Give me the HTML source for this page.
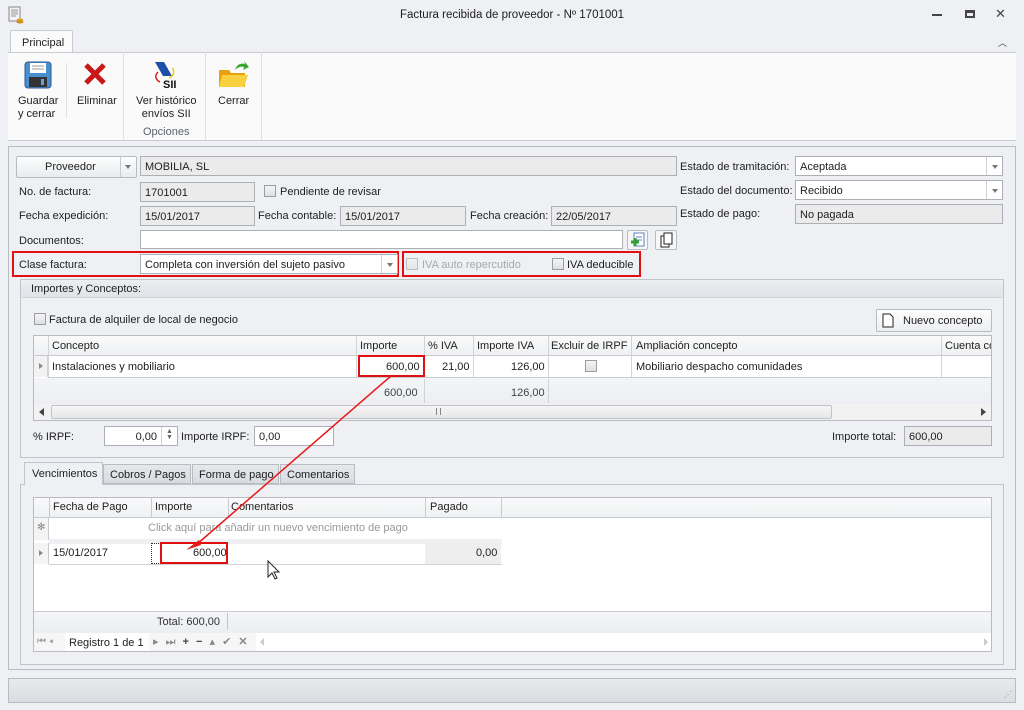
<!DOCTYPE html>
<html><head><meta charset="utf-8"><style>
*{box-sizing:border-box;margin:0;padding:0}
body{width:1024px;height:710px;position:relative;overflow:hidden;background:#eef0f3;font-family:"Liberation Sans",sans-serif;font-size:11px;color:#1e1e1e}
.a{position:absolute;white-space:nowrap}
.f{position:absolute;border:1px solid #acb0b6;background:#ebebeb;padding:4px 4px;height:20px;line-height:12px}
.w{background:#fff}
.cb{position:absolute;width:12px;height:12px;border:1px solid #9a9ea4;background:linear-gradient(#f4f4f4,#e0e0e0)}
.red{position:absolute;border:2px solid #e01010}
.dd{position:absolute;right:0;top:0;width:16px;height:100%;border-left:1px solid #d0d0d0}
.dd:after{content:"";position:absolute;left:5px;top:8px;border:3px solid transparent;border-top:4px solid #777}
</style></head><body>
<div class="a" style="left:0;top:0;width:1024px;height:30px;background:#eef0f3"></div>
<svg class="a" style="left:8px;top:6px" width="16" height="18"><rect x="1" y="1" width="11" height="14" fill="#f4f4f4" stroke="#888"/><path d="M3 4h7M3 6h7M3 8h7M3 10h5" stroke="#999"/><ellipse cx="12" cy="14" rx="3.5" ry="1.5" fill="#e0a020"/><ellipse cx="12" cy="16" rx="3.5" ry="1.5" fill="#d09010"/></svg>
<div class="a" style="left:0;width:1024px;top:9px;text-align:center;font-size:11.5px">Factura recibida de proveedor - Nº 1701001</div>
<div class="a" style="left:932px;top:14px;width:10px;height:2px;background:#444"></div>
<div class="a" style="left:965px;top:10px;width:10px;height:8px;border:2px solid #444;border-top-width:3px"></div>
<div class="a" style="left:995px;top:6px;font-size:13px;color:#444">✕</div>
<div class="a" style="left:10px;top:30px;width:63px;height:23px;background:#fbfbfb;border:1px solid #c8ccd2;border-bottom:none;border-radius:2px 2px 0 0;padding:6px 0 0 11px">Principal</div>
<div class="a" style="left:998px;top:36px;font-size:9px;color:#444">︿</div>
<div class="a" style="left:8px;top:52px;width:1008px;height:89px;background:#fafafa;border-top:1px solid #c8ccd2;border-bottom:1px solid #c8ccd2"></div>
<div class="a" style="left:123px;top:52px;width:1px;height:88px;background:#dde0e4"></div>
<div class="a" style="left:205px;top:52px;width:1px;height:88px;background:#dde0e4"></div>
<div class="a" style="left:261px;top:52px;width:1px;height:88px;background:#dde0e4"></div>
<div class="a" style="left:66px;top:63px;width:1px;height:55px;background:#dde0e4"></div>
<svg class="a" style="left:24px;top:61px" width="28" height="28"><rect x="1" y="1" width="26" height="26" rx="3" fill="#4a8ed0" stroke="#2a5a90"/><rect x="6" y="2" width="16" height="10" fill="#fff"/><path d="M8 5h12M8 8h12" stroke="#999"/><rect x="5" y="16" width="18" height="10" fill="#333"/><rect x="17" y="18" width="3" height="6" fill="#6aa0d8"/></svg>
<div class="a" style="left:18px;top:95px;line-height:13px">Guardar<br>y cerrar</div>
<svg class="a" style="left:83px;top:62px" width="24" height="24"><path d="M3 3L21 21M21 3L3 21" stroke="#c81818" stroke-width="5"/></svg>
<div class="a" style="left:77px;top:95px">Eliminar</div>
<svg class="a" style="left:150px;top:60px" width="30" height="30"><path d="M5 2h9l8 14h-9z" fill="#1d4fa8"/><path d="M8 12c-4 4-2 8 2 10" stroke="#d02020" stroke-width="1.5" fill="none"/><path d="M22 8c3 3 2 8-3 10" stroke="#e0d020" stroke-width="1.5" fill="none"/><text x="13" y="28" font-family="Liberation Sans" font-weight="bold" font-size="11" fill="#111">SII</text></svg>
<div class="a" style="left:136px;top:95px;line-height:13px;text-align:center">Ver histórico<br>envíos SII</div>
<div class="a" style="left:143px;top:126px;color:#5a6470">Opciones</div>
<svg class="a" style="left:217px;top:58px" width="34" height="34"><path d="M2 12h10l2 3h14v14H2z" fill="#e8a010"/><path d="M5 17h26l-4 12H2z" fill="#f8d040"/><path d="M18 12c2-6 6-7 10-6l-1-3 5 6-6 3 1-3c-3-1-6 0-9 3z" fill="#3aa830"/></svg>
<div class="a" style="left:218px;top:95px">Cerrar</div>
<div class="a" style="left:8px;top:146px;width:1008px;height:524px;border:1px solid #b8bcc2;background:#eef0f3"></div>
<div class="a" style="left:16px;top:156px;width:121px;height:22px;border:1px solid #b8bcc2;border-radius:2px;background:linear-gradient(#fdfdfd,#e9ebee)"></div>
<div class="a" style="left:45px;top:161px">Proveedor</div>
<div class="a" style="left:120px;top:157px;width:1px;height:20px;background:#c8ccd2"></div>
<div class="a" style="left:125px;top:165px;border:3px solid transparent;border-top:4px solid #777"></div>
<div class="f" style="left:140px;top:156px;width:537px">MOBILIA, SL</div>
<div class="a" style="left:19px;top:186px">No. de factura:</div>
<div class="f" style="left:140px;top:182px;width:115px">1701001</div>
<div class="cb" style="left:264px;top:185px"></div><div class="a" style="left:280px;top:186px">Pendiente de revisar</div>
<div class="a" style="left:19px;top:210px">Fecha expedición:</div>
<div class="f" style="left:140px;top:206px;width:115px">15/01/2017</div>
<div class="a" style="left:258px;top:210px">Fecha contable:</div>
<div class="f" style="left:340px;top:206px;width:126px">15/01/2017</div>
<div class="a" style="left:470px;top:210px">Fecha creación:</div>
<div class="f" style="left:551px;top:206px;width:126px">22/05/2017</div>
<div class="a" style="left:19px;top:235px">Documentos:</div>
<div class="f w" style="left:140px;top:230px;width:483px;height:19px"></div>
<div class="a" style="left:627px;top:230px;width:21px;height:20px;border:1px solid #b8bcc2;border-radius:2px;background:#f6f6f6"><svg width="19" height="18"><rect x="6" y="2" width="10" height="13" fill="#fff" stroke="#6080c0"/><path d="M8 6h6M8 9h6" stroke="#6080c0"/><path d="M3 11h8M7 7v8" stroke="#30a030" stroke-width="3"/></svg></div>
<div class="a" style="left:655px;top:230px;width:22px;height:20px;border:1px solid #b8bcc2;border-radius:2px;background:#f6f6f6"><svg width="20" height="18"><rect x="5" y="5" width="8" height="11" fill="#fff" stroke="#222"/><rect x="8" y="2" width="8" height="11" fill="#fff" stroke="#222"/></svg></div>
<div class="red" style="left:12px;top:251px;width:387px;height:26px"></div>
<div class="a" style="left:19px;top:259px">Clase factura:</div>
<div class="f w" style="left:140px;top:254px;width:258px"><span>Completa con inversión del sujeto pasivo</span><div class="dd"></div></div>
<div class="red" style="left:402px;top:251px;width:239px;height:26px"></div>
<div class="cb" style="left:406px;top:258px;opacity:.6"></div><div class="a" style="left:422px;top:259px;color:#a8a8a8">IVA auto repercutido</div>
<div class="cb" style="left:552px;top:258px"></div><div class="a" style="left:567px;top:259px">IVA deducible</div>
<div class="a" style="left:680px;top:161px">Estado de tramitación:</div>
<div class="f w" style="left:795px;top:156px;width:208px">Aceptada<div class="dd"></div></div>
<div class="a" style="left:680px;top:185px">Estado del documento:</div>
<div class="f w" style="left:795px;top:180px;width:208px">Recibido<div class="dd"></div></div>
<div class="a" style="left:680px;top:208px">Estado de pago:</div>
<div class="f" style="left:795px;top:204px;width:208px">No pagada</div>
<div class="a" style="left:20px;top:279px;width:984px;height:179px;border:1px solid #c0c4ca;background:#eef0f3"></div>
<div class="a" style="left:21px;top:280px;width:982px;height:18px;background:linear-gradient(#eceef1,#e0e3e7);border-bottom:1px solid #d0d4d9;padding:3px 10px">Importes y Conceptos:</div>
<div class="cb" style="left:34px;top:313px"></div><div class="a" style="left:49px;top:314px">Factura de alquiler de local de negocio</div>
<div class="a" style="left:876px;top:309px;width:116px;height:23px;border:1px solid #b8bcc2;border-radius:2px;background:linear-gradient(#fdfdfd,#eceef1)"></div>
<svg class="a" style="left:882px;top:313px" width="12" height="15"><path d="M1 1h7l3 3v10H1z" fill="#fff" stroke="#222"/></svg>
<div class="a" style="left:903px;top:315px">Nuevo concepto</div>
<div class="a" style="left:33px;top:335px;width:959px;height:86px;border:1px solid #b8bcc2;background:#fff;overflow:hidden">
 <div class="a" style="left:0;top:0;width:959px;height:20px;background:linear-gradient(#fafafa,#eef0f2);border-bottom:1px solid #c8ccd2"></div>
 <div class="a" style="left:0;top:20px;width:14px;height:21px;background:#f2f2f2;border-right:1px solid #d0d4d9"></div>
 <div class="a" style="left:5px;top:27px;border:3px solid transparent;border-left:4px solid #888"></div>
 <div class="a" style="left:14px;top:0;width:1px;height:41px;background:#d0d4d9"></div>
 <div class="a" style="left:322px;top:0;width:1px;height:41px;background:#d0d4d9"></div>
 <div class="a" style="left:390px;top:0;width:1px;height:68px;background:#d0d4d9"></div>
 <div class="a" style="left:439px;top:0;width:1px;height:41px;background:#d0d4d9"></div>
 <div class="a" style="left:514px;top:0;width:1px;height:68px;background:#d0d4d9"></div>
 <div class="a" style="left:597px;top:0;width:1px;height:41px;background:#d0d4d9"></div>
 <div class="a" style="left:907px;top:0;width:1px;height:41px;background:#d0d4d9"></div>
 <div class="a" style="left:18px;top:4px">Concepto</div><div class="a" style="left:326px;top:4px">Importe</div><div class="a" style="left:394px;top:4px">% IVA</div><div class="a" style="left:443px;top:4px">Importe IVA</div><div class="a" style="left:517px;top:4px">Excluir de IRPF</div><div class="a" style="left:602px;top:4px">Ampliación concepto</div><div class="a" style="left:911px;top:4px">Cuenta co</div>
 <div class="a" style="left:14px;top:41px;width:945px;height:1px;background:#c8ccd2"></div>
 <div class="a" style="left:18px;top:25px">Instalaciones y mobiliario</div>
 <div class="a" style="left:352px;top:25px">600,00</div><div class="a" style="left:408px;top:25px">21,00</div><div class="a" style="left:477px;top:25px">126,00</div>
 <div class="cb" style="left:551px;top:24px"></div>
 <div class="a" style="left:602px;top:25px">Mobiliario despacho comunidades</div>
 <div class="a" style="left:0;top:42px;width:959px;height:26px;background:linear-gradient(#f4f5f7,#eceef1)"></div>
 <div class="a" style="left:390px;top:43px;width:1px;height:24px;background:#d0d4d9"></div><div class="a" style="left:514px;top:43px;width:1px;height:24px;background:#d0d4d9"></div>
 <div class="a" style="left:350px;top:51px;color:#444">600,00</div><div class="a" style="left:477px;top:51px;color:#444">126,00</div>
 <div class="a" style="left:0;top:68px;width:959px;height:18px;background:#f2f2f2"></div>
 <div class="a" style="left:5px;top:72px;border:4px solid transparent;border-right:5px solid #444;border-left:0"></div>
 <div class="a" style="left:17px;top:69px;width:781px;height:14px;border:1px solid #c0c4ca;border-radius:2px;background:linear-gradient(#f6f6f6,#e6e6e6)"></div>
 <div class="a" style="left:402px;top:72px;width:5px;height:7px;border-left:1px solid #888;border-right:1px solid #888"></div>
 <div class="a" style="left:947px;top:72px;border:4px solid transparent;border-left:5px solid #444;border-right:0"></div>
</div>
<div class="red" style="left:358px;top:355px;width:67px;height:22px"></div>
<div class="a" style="left:33px;top:431px">% IRPF:</div>
<div class="f w" style="left:104px;top:426px;width:74px;text-align:right;padding-right:20px">0,00</div>
<div class="a" style="left:161px;top:427px;width:1px;height:18px;background:#d0d0d0"></div>
<div class="a" style="left:166px;top:429px;font-size:7px;color:#666;line-height:6px">▲<br>▼</div>
<div class="a" style="left:181px;top:431px">Importe IRPF:</div>
<div class="f w" style="left:254px;top:426px;width:80px">0,00</div>
<div class="a" style="left:832px;top:431px">Importe total:</div>
<div class="f" style="left:904px;top:426px;width:88px">600,00</div>
<div class="a" style="left:20px;top:484px;width:984px;height:181px;border:1px solid #c0c4ca;background:#eef0f3"></div>
<div class="a" style="left:24px;top:462px;width:79px;height:23px;border:1px solid #c0c4ca;border-bottom:none;background:#eef0f3;padding:5px 0 0 7px">Vencimientos</div>
<div class="a" style="left:103px;top:464px;width:88px;height:20px;border:1px solid #b8bcc2;background:linear-gradient(#e6e8eb,#d8dbe0);padding:4px 0 0 6px">Cobros / Pagos</div>
<div class="a" style="left:192px;top:464px;width:87px;height:20px;border:1px solid #b8bcc2;background:linear-gradient(#e6e8eb,#d8dbe0);padding:4px 0 0 6px">Forma de pago</div>
<div class="a" style="left:280px;top:464px;width:75px;height:20px;border:1px solid #b8bcc2;background:linear-gradient(#e6e8eb,#d8dbe0);padding:4px 0 0 6px">Comentarios</div>
<div class="a" style="left:33px;top:497px;width:959px;height:155px;border:1px solid #b8bcc2;background:#fff;overflow:hidden">
 <div class="a" style="left:0;top:0;width:959px;height:20px;background:linear-gradient(#fafafa,#eef0f2);border-bottom:1px solid #c8ccd2"></div>
 <div class="a" style="left:15px;top:0;width:1px;height:20px;background:#c8ccd2"></div><div class="a" style="left:117px;top:0;width:1px;height:20px;background:#c8ccd2"></div><div class="a" style="left:194px;top:0;width:1px;height:20px;background:#c8ccd2"></div><div class="a" style="left:391px;top:0;width:1px;height:20px;background:#c8ccd2"></div><div class="a" style="left:467px;top:0;width:1px;height:20px;background:#c8ccd2"></div>
 <div class="a" style="left:19px;top:3px">Fecha de Pago</div><div class="a" style="left:121px;top:3px">Importe</div><div class="a" style="left:197px;top:3px">Comentarios</div><div class="a" style="left:396px;top:3px">Pagado</div>
 <div class="a" style="left:0;top:20px;width:15px;height:22px;border-right:1px solid #c8ccd2;background:#f4f4f4;color:#888;font-size:10px;padding:4px 3px">✻</div>
 <div class="a" style="left:114px;top:24px;color:#999">Click aquí para añadir un nuevo vencimiento de pago</div>
 <div class="a" style="left:15px;top:41px;width:453px;height:5px;background:#eef0f2"></div>
 <div class="a" style="left:0;top:45px;width:15px;height:21px;border-right:1px solid #c8ccd2;background:#f4f4f4"></div>
 <div class="a" style="left:5px;top:52px;border:3px solid transparent;border-left:4px solid #888"></div>
 <div class="a" style="left:15px;top:66px;width:453px;height:1px;background:#d0d4d9"></div>
 <div class="a" style="left:19px;top:49px">15/01/2017</div>
 <div class="a" style="left:117px;top:45px;width:12px;height:21px;border:1px dotted #333;border-right:none"></div>
 <div class="a" style="left:159px;top:49px">600,00</div>
 <div class="a" style="left:391px;top:45px;width:76px;height:21px;background:#eeeeee"></div>
 <div class="a" style="left:442px;top:49px">0,00</div>
 <div class="a" style="left:0;top:113px;width:959px;height:22px;background:linear-gradient(#f4f5f7,#eceef1);border-top:1px solid #c8ccd2"></div>
 <div class="a" style="left:123px;top:118px;color:#333">Total: 600,00</div>
 <div class="a" style="left:193px;top:115px;width:1px;height:17px;background:#c0c4ca"></div>
 <div class="a" style="left:0;top:135px;width:959px;height:20px;background:#f6f6f6"></div>
 <div class="a" style="left:31px;top:135px;width:84px;height:18px;background:#fff"></div>
 <div class="a" style="left:3px;top:138px;color:#999;font-size:10px">⏮ ◂</div>
 <div class="a" style="left:35px;top:139px">Registro 1 de 1</div>
 <div class="a" style="left:119px;top:137px;color:#888;font-size:11px;letter-spacing:2px">▸ ⏭ <b style="color:#444">+ −</b> ▴ ✔ <b style="color:#888">✕</b></div>
 <div class="a" style="left:222px;top:135px;width:737px;height:18px;background:#fff"></div>
 <div class="a" style="left:226px;top:140px;border:4px solid transparent;border-right:4px solid #ccc;border-left:0"></div>
 <div class="a" style="left:950px;top:140px;border:4px solid transparent;border-left:4px solid #ccc;border-right:0"></div>
</div>
<div class="red" style="left:160px;top:542px;width:68px;height:22px"></div>
<svg class="a" style="left:0;top:0" width="1024" height="710"><path d="M391 376L196 545" stroke="#e81818" stroke-width="1.5"/><path d="M186 550l13-10 2 5z" fill="#e81818"/><path d="M268 561v16l4-4 3 6 2-1-3-6h5z" fill="#fff" stroke="#222"/></svg>
<div class="a" style="left:8px;top:678px;width:1008px;height:25px;border:1px solid #b8bcc2;background:linear-gradient(#e8eaed,#dadde1)"></div>
<div class="a" style="left:1004px;top:690px;color:#999;font-size:8px">⋰</div>
</body></html>
